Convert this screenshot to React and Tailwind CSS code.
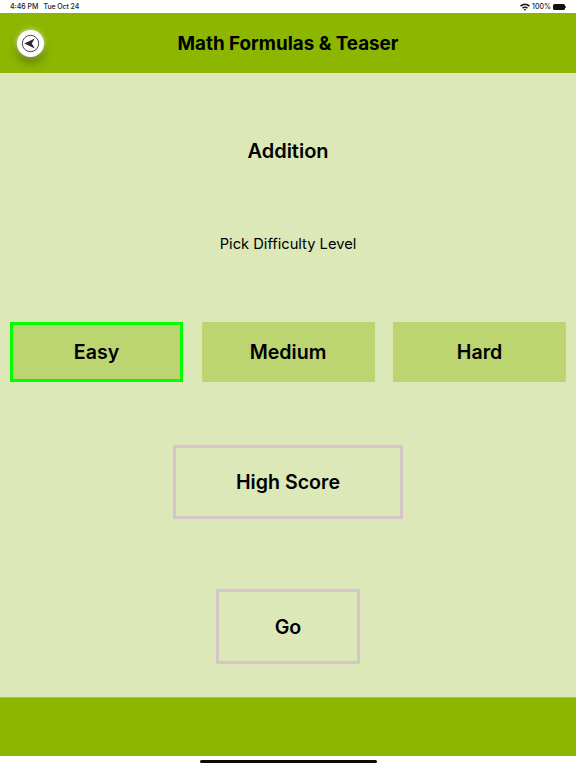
const font = { fontFamily: 'Inter, "Liberation Sans", sans-serif' }

function BackIcon() {
  return (
    <svg width="19" height="19" viewBox="0 0 19 19">
      <circle cx="9.5" cy="9.5" r="8.2" fill="none" stroke="#444" strokeWidth="1" />
      <path d="M3.2 9.5 L13.8 4.6 L10.8 9.5 L13.8 14.4 Z" fill="#2c2c2c" />
    </svg>
  )
}

function StatusBar() {
  return (
    <div className="h-[13px] bg-white flex items-center justify-between pl-[10px] pr-[10px] pt-[1px] text-[7px] text-[#222] font-medium">
      <div className="flex gap-[5px]">
        <span>4:46 PM</span>
        <span className="tracking-[-0.1px]">Tue Oct 24</span>
      </div>
      <div className="flex items-center gap-[2px]">
        <svg width="10" height="8" viewBox="0 0 10 8">
          <path d="M0 2.6 C2.8 -0.2 7.2 -0.2 10 2.6 L8.9 3.8 C6.6 1.6 3.4 1.6 1.1 3.8 Z" fill="#222" />
          <path d="M2 4.6 C3.7 3 6.3 3 8 4.6 L7 5.7 C5.8 4.7 4.2 4.7 3 5.7 Z" fill="#222" />
          <path d="M3.8 6.4 C4.5 5.9 5.5 5.9 6.2 6.4 L5 7.8 Z" fill="#222" />
        </svg>
        <span>100%</span>
        <div className="flex items-center">
          <div className="w-[12px] h-[6px] bg-[#111] rounded-[1.5px]"></div>
          <div className="w-[1px] h-[2px] bg-[#555]"></div>
        </div>
      </div>
    </div>
  )
}

export default function App() {
  return (
    <div style={font} className="w-[576px] h-[768px] bg-white flex flex-col text-black overflow-hidden">
      <StatusBar />

      <header className="relative h-[60px] bg-[#8db600] flex items-center justify-center pt-[2px]">
        <button className="absolute left-[17px] top-[17px] w-[27px] h-[27px] rounded-full bg-white flex items-center justify-center shadow-[0_6px_8px_rgba(50,60,0,0.45),0_0_5px_rgba(255,255,255,0.8)]">
          <BackIcon />
        </button>
        <h1 className="text-[18.8px] font-bold">Math Formulas &amp; Teaser</h1>
      </header>

      <main className="h-[624px] bg-[#dce8b8] flex flex-col items-center">
        <h2 className="mt-[64px] h-[28px] leading-[28px] text-[20px] font-semibold">Addition</h2>
        <p className="mt-[67px] h-[24px] leading-[24px] text-[14.7px]">Pick Difficulty Level</p>

        <div className="mt-[66px] w-full px-[10px] flex justify-between">
          <button className="w-[173px] h-[60px] pt-[2px] bg-[#bdd571] border-[3px] border-[#00ff00] text-[19.6px] font-semibold">Easy</button>
          <button className="w-[173px] h-[60px] pt-[2px] bg-[#bdd571] text-[19.6px] font-semibold">Medium</button>
          <button className="w-[173px] h-[60px] pt-[2px] bg-[#bdd571] text-[19.6px] font-semibold">Hard</button>
        </div>

        <button className="mt-[63px] w-[230px] h-[74px] pt-[2px] border-[3px] border-[#d3c5c8] text-[19.6px] font-semibold">High Score</button>
        <button className="mt-[70px] w-[144px] h-[75px] pt-[2px] border-[3px] border-[#d3c5c8] text-[19.6px] font-semibold">Go</button>
      </main>

      <footer className="h-[59px] bg-[#8db600] border-t border-[#a9c94a]"></footer>

      <div className="flex-1 bg-white flex justify-center pt-[4px]">
        <div className="w-[177px] h-[3px] rounded-full bg-[#0a0a0a]"></div>
      </div>
    </div>
  )
}
